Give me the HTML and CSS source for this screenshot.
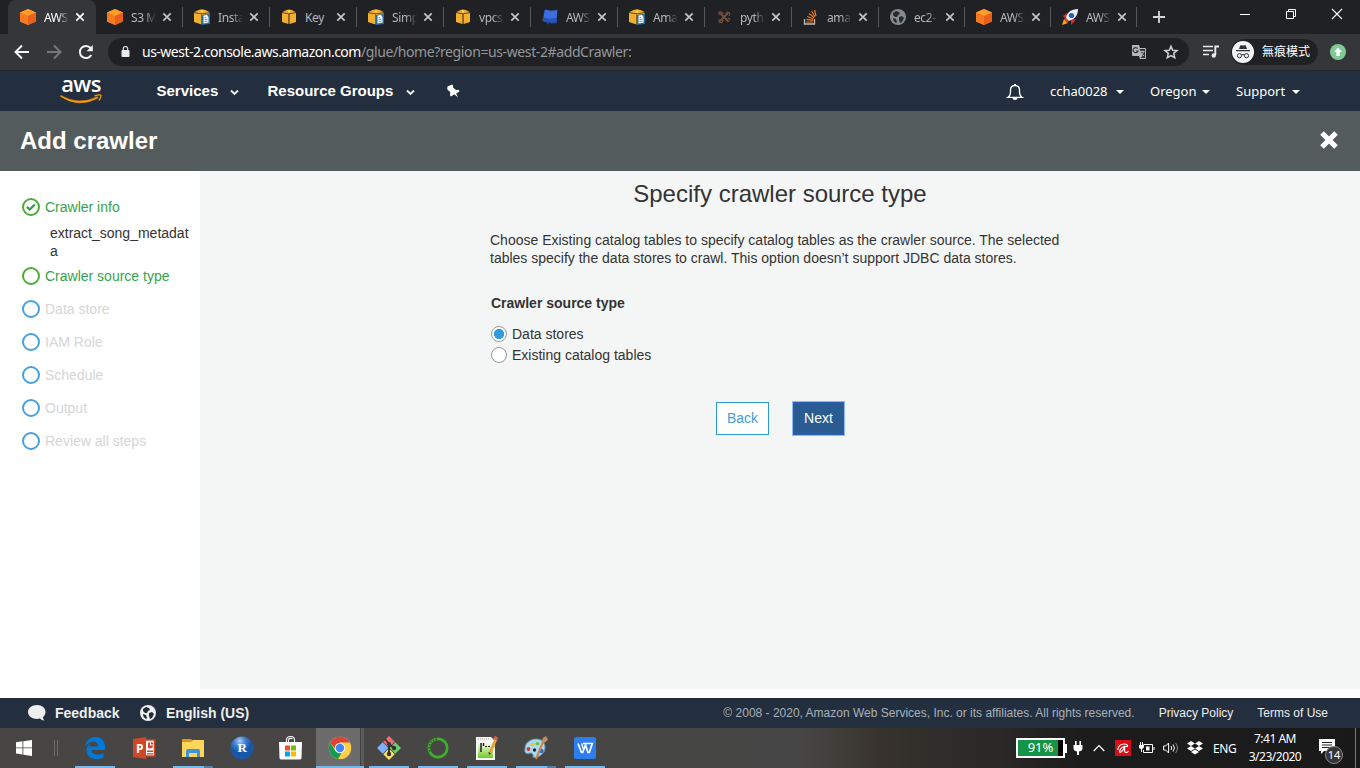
FILE: index.html
```html
<!DOCTYPE html>
<html lang="en">
<head>
<meta charset="utf-8">
<title>AWS Glue Console</title>
<link rel="stylesheet" href="styles.css">
</head>
<body>
<svg class="defs" width="0" height="0">
  <symbol id="cube" viewBox="0 0 16 16"><path fill="#f58020" d="M8 0l8 3.500v9L8 16l-8-3.500v-9z"/><path fill="#ff9d2c" d="M8 0l8 3.500L8 7 0 3.500z"/><path fill="#e8601c" d="M8 7l8-3.500v9L8 16z"/><path fill="#f67b20" d="M0 3.500L8 7v9l-8-3.500z"/></symbol>
  <symbol id="box" viewBox="0 0 16 16"><path fill="#f2b02e" d="M1 4l6.500 1v10L1 13zM8.500 5L15 4v9l-6.500 2z"/><path fill="#eda51f" d="M1 3.300L5.500 1 8 .5 11 1l4 2.300L8 4.500z"/><path fill="#ffc94d" d="M6.500 1h3l-.5 3H7z"/></symbol>
  <symbol id="boxdoc" viewBox="0 0 16 16"><path fill="#f2b02e" d="M0 4l7.500 1v10.500L0 13z"/><path fill="#dc9b25" d="M8 5l7.500-1v2L8 7z"/><path fill="#f5ae24" d="M0 3.300L4.500 1 8 .3l3.500.7L16 3.300 8 4.500z"/><path fill="#ffc94d" d="M6.500 1h3l-.5 3H7z"/><path fill="#1b6fa8" d="M8 6l8-1v10l-8 1z"/><path fill="#fff" d="M9.500 6.500L13 6l1.500 2v5.500l-5 1z"/><path stroke="#2476b2" stroke-width=".8" d="M10.500 8.500h1.500M10.500 10.400h3M10.500 12.300h3"/></symbol>
  <symbol id="x" viewBox="0 0 10 10"><path d="M1.300 1.300l7.400 7.400M8.700 1.300L1.300 8.700" stroke="currentColor" stroke-width="1.700"/></symbol>
  <symbol id="globe" viewBox="0 0 16 16"><circle cx="8" cy="8" r="8" fill="currentColor"/><path class="land" d="M3 4l3-2 3 1 1 2-2 1-1 2H5L3 6zM9 8l3-1 2 2-2 4-2 1-1-3zM3 9l3 1 1 3-1 1c-2-1-3-3-3-5z"/></symbol>
</svg>

<div class="tabstrip">
  <div class="tabs">
    <div class="tab active"><svg class="fav"><use href="#cube"/></svg><span>AWS</span><svg class="close"><use href="#x"/></svg></div>
    <div class="tab"><svg class="fav"><use href="#cube"/></svg><span>S3 M</span><svg class="close"><use href="#x"/></svg></div>
    <div class="tab"><svg class="fav"><use href="#boxdoc"/></svg><span>Insta</span><svg class="close"><use href="#x"/></svg></div>
    <div class="tab"><svg class="fav"><use href="#box"/></svg><span class="full">Key</span><svg class="close"><use href="#x"/></svg></div>
    <div class="tab"><svg class="fav"><use href="#boxdoc"/></svg><span>Simp</span><svg class="close"><use href="#x"/></svg></div>
    <div class="tab"><svg class="fav"><use href="#box"/></svg><span>vpcs</span><svg class="close"><use href="#x"/></svg></div>
    <div class="tab"><svg class="fav" viewBox="0 0 16 16"><path fill="#1d429f" d="M2 1q6 2 13 0v13q-4 1-8 0l-2 2v-2.500L1 12.500z"/><path fill="#3f6ddc" d="M3 .5q6 2 12.500.5L14.500 9Q7 11 1.500 8.500z"/><path fill="#2855bd" d="M1 9q6 2 13.500 0v4Q7 14.500 .5 12z"/></svg><span>AWS</span><svg class="close"><use href="#x"/></svg></div>
    <div class="tab"><svg class="fav"><use href="#boxdoc"/></svg><span>Ama</span><svg class="close"><use href="#x"/></svg></div>
    <div class="tab"><svg class="fav" viewBox="0 0 16 16"><path d="M4 4l8 8M12 4l-8 8" stroke="#75513c" stroke-width="1.800"/><path d="M3 6V3h3l1 2M10 5l1-2 3 1-1 3M3 10v3l3 1 1-3M10 11l2 2 2-3-2-1" fill="none" stroke="#80543d"/></svg><span>pyth</span><svg class="close"><use href="#x"/></svg></div>
    <div class="tab"><svg class="fav" viewBox="0 0 16 16"><path d="M1.500 10v5h10v-5" fill="none" stroke="#bcbbbb" stroke-width="1.300"/><path d="M3.300 13h6.500M3.500 10.300l6.500 1M4.300 7.500l6 2.500M6 4.500l5.200 4.300M8.500 2l3.500 5.700M11.500 1l1.500 6" stroke="#ee7a23" stroke-width="1.200"/></svg><span>ama</span><svg class="close"><use href="#x"/></svg></div>
    <div class="tab"><svg class="fav gray"><use href="#globe"/></svg><span>ec2-</span><svg class="close"><use href="#x"/></svg></div>
    <div class="tab"><svg class="fav"><use href="#cube"/></svg><span>AWS</span><svg class="close"><use href="#x"/></svg></div>
    <div class="tab"><svg class="fav" viewBox="0 0 16 16"><path fill="#cc332c" d="M1 7l4-3 2 2-3 4zM9 12l3-3 1 3-4 4z"/><path fill="#eceef2" d="M4 10C4 4 9 0 16 0c0 7-4 11-10 12z"/><path fill="#f8a51b" d="M0 16l2-6 4 4z"/><path fill="#dc3b2e" d="M2 10l2-1 3 3-2 2z"/><circle cx="9.500" cy="6.500" r="2.600" fill="#235ad5"/></svg><span>AWS</span><svg class="close"><use href="#x"/></svg></div>
  </div>
  <svg class="plus" viewBox="0 0 12 12"><path d="M6 0v12M0 6h12" stroke="#d5d7da" stroke-width="1.800"/></svg>
  <div class="wincontrols">
    <svg viewBox="0 0 12 12"><path d="M1 6.500h10" stroke="#fff"/></svg>
    <svg viewBox="0 0 12 12"><path d="M1.500 3.500h7v7h-7zM3.500 3V1.500h7v7H9" fill="none" stroke="#fff"/></svg>
    <svg viewBox="0 0 12 12"><path d="M1 1l10 10M11 1L1 11" stroke="#fff" stroke-width="1.100"/></svg>
  </div>
</div>

<div class="toolbar">
  <svg class="tbtn" viewBox="0 0 16 16"><path d="M15 8H2M8 1.500L1.500 8 8 14.500" fill="none" stroke="#f1f3f4" stroke-width="1.900"/></svg>
  <svg class="tbtn" viewBox="0 0 16 16"><path d="M1 8h13M8 1.500L14.500 8 8 14.500" fill="none" stroke="#77787b" stroke-width="1.900"/></svg>
  <svg class="tbtn" viewBox="0 0 16 16"><path d="M13.300 11A6.100 6.100 0 1 1 12.600 4" fill="none" stroke="#f1f3f4" stroke-width="2"/><path d="M14.800 1v6.200H8.600z" fill="#f1f3f4"/></svg>
  <div class="omnibox">
    <svg class="lock" viewBox="0 0 10 12"><path fill="#e8eaed" d="M1.500 4h6q1 0 1 1v5q0 1-1 1h-6q-1 0-1-1V5q0-1 1-1z"/><path d="M2.300 4.500V2.700a2.200 2.200 0 0 1 4.400 0v1.800" fill="none" stroke="#e8eaed" stroke-width="1.100"/></svg>
    <div class="url"><b>us-west-2.console.aws.amazon.com</b><span>/glue/home?region=us-west-2#addCrawler:</span></div>
    <svg class="translate" viewBox="0 0 16 16"><path fill="#b4b6b9" d="M1 1h7l1 3h5q1 0 1 1v9q0 1-1 1H9l-1-3H2q-1 0-1-1z"/><path fill="#303235" d="M8.500 5H14v9H9.500l2-2z"/><path d="M6.700 4.700A2.500 2.500 0 1 0 7 7H5" fill="none" stroke="#333538" stroke-width="1.200"/><path d="M9 7.500h4.500M11.200 6.500v1M12.700 7.500q-1 3-2.500 4M10 8.500q1 2 3 3.500" fill="none" stroke="#b4b6b9"/></svg>
    <svg class="star" viewBox="0 0 16 16"><path d="M8 2.200l1.700 4 4.300.4-3.300 2.800 1 4.300L8 11.500l-3.700 2.200 1-4.300L2 6.600l4.300-.4z" fill="none" stroke="#cfd1d4" stroke-width="1.500"/></svg>
  </div>
  <svg class="playlist" viewBox="0 0 16 14"><path d="M0 1.500h10M0 5.500h10M0 9.500h6" stroke="#e8eaed" stroke-width="1.700"/><path d="M12.300 10V1.500H16" fill="none" stroke="#e8eaed" stroke-width="1.900"/><circle cx="10.800" cy="10.500" r="2.200" fill="#e8eaed"/></svg>
  <div class="incognito">
    <svg viewBox="0 0 22 22"><circle cx="11" cy="11" r="11" fill="#f1f3f4"/><path fill="#303134" d="M7 8l1.200-3.500Q8.500 3.800 11 4.500q2.500-.7 2.800 0L15 8z"/><path d="M4 9.700h14M9.500 14q1.500-1 3 0" fill="none" stroke="#303134" stroke-width="1.200"/><circle cx="7.500" cy="14.700" r="2.100" fill="none" stroke="#303134"/><circle cx="14.500" cy="14.700" r="2.100" fill="none" stroke="#303134"/></svg>
    <span>無痕模式</span>
  </div>
  <svg class="update" viewBox="0 0 16 16"><circle cx="8" cy="8" r="8" fill="#81c995"/><path fill="#fff" d="M8 3.500l4 4.500H9.700v4H6.300V8H4z"/></svg>
</div>

<nav class="awsnav">
  <div class="logo"><span>aws</span>
    <svg viewBox="0 0 42 11"><path d="M.8 1.500Q19 12 37.500 2.700L38 4Q18 14.500.4 2.300z" fill="#f90" stroke="#f90" stroke-width=".6"/><path d="M34.500 1.800q6.500-1.600 6.500-.3 0 2.200-2.200 5" fill="none" stroke="#f90" stroke-width="1.300"/></svg></div>
  <span class="navbold services">Services</span><svg class="chev" viewBox="0 0 9 7"><path d="M1 1.500l3.500 3.500L8 1.500" fill="none" stroke="#eee" stroke-width="1.900"/></svg>
  <span class="navbold groups">Resource Groups</span><svg class="chev" viewBox="0 0 9 7"><path d="M1 1.500l3.500 3.500L8 1.500" fill="none" stroke="#eee" stroke-width="1.900"/></svg>
  <svg class="pin" viewBox="0 0 14 14"><path fill="#fff" d="M1.500 2.500L6 .5l1.200 1L7 3.500 10 6l2.500-.3 1 1.500-3.300 2.500L12 13.500 8.300 10.300 5 12.500l-1-1.200.3-3L1.200 5.300z"/></svg>
  <div class="navright">
    <svg class="bell" viewBox="0 0 16 18"><path d="M1 14.300q2.500-1.500 2.500-5V7Q3.500 2.500 8 2.500T12.500 7v2.300q0 3.500 2.500 5z" fill="none" stroke="#fff" stroke-width="1.300"/><path d="M8 1v2" stroke="#fff" stroke-width="2"/><path fill="#fff" d="M5.500 15h5q0 2-2.500 2T5.500 15z"/></svg>
    <span class="user">ccha0028</span><i class="caret"></i>
    <span class="region">Oregon</span><i class="caret"></i>
    <span class="support">Support</span><i class="caret"></i>
  </div>
</nav>

<header class="pagehead"><h1>Add crawler</h1><svg viewBox="0 0 20 20"><path d="M3 3l14 14M17 3L3 17" stroke="#fff" stroke-width="5.200"/></svg></header>

<main class="content">
  <aside class="steps">
    <div class="step done"><i><svg viewBox="0 0 14 14"><path d="M3 6.800l2.800 2.700 5-5" fill="none" stroke="#2ea043" stroke-width="2.300"/></svg></i>Crawler info</div>
    <div class="substep">extract_song_metadata</div>
    <div class="step done"><i></i>Crawler source type</div>
    <div class="step"><i></i>Data store</div>
    <div class="step"><i></i>IAM Role</div>
    <div class="step"><i></i>Schedule</div>
    <div class="step"><i></i>Output</div>
    <div class="step"><i></i>Review all steps</div>
  </aside>
  <section class="panel">
    <h2>Specify crawler source type</h2>
    <div class="form">
      <p>Choose Existing catalog tables to specify catalog tables as the crawler source. The selected tables specify the data stores to crawl. This option doesn’t support JDBC data stores.</p>
      <h3>Crawler source type</h3>
      <div class="option"><i class="radio on"></i>Data stores</div>
      <div class="option"><i class="radio"></i>Existing catalog tables</div>
      <div class="buttons"><button class="back">Back</button><button class="next">Next</button></div>
    </div>
  </section>
</main>

<footer class="awsfoot">
  <svg class="bubble" viewBox="0 0 18 16"><path fill="#eee" d="M9 0c5 0 8.500 3 8.500 7 0 2-1 4-2.500 5 0 1.500.5 2.500 1.500 3.500-2 0-3.500-.7-4.500-2C6 15 0 12 0 7 0 3 4 0 9 0z"/></svg>
  <b class="feedback">Feedback</b>
  <svg class="world"><use href="#globe"/></svg>
  <b class="lang">English (US)</b>
  <div class="legal"><span class="copy">© 2008 - 2020, Amazon Web Services, Inc. or its affiliates. All rights reserved.</span><a>Privacy Policy</a><a>Terms of Use</a></div>
</footer>

<div class="taskbar">
  <svg class="start" viewBox="0 0 16 16"><path fill="#fff" d="M0 2.300l6.500-1v6.200H0zM7.300 1.200L16 0v7.500H7.300zM0 8.300h6.500v6.200l-6.500-1zM7.300 8.300H16V16l-8.700-1.300z"/></svg>
  <i class="grip"></i>
  <div class="apps">
    <div class="app run"><svg viewBox="0 0 24 24"><path fill="#0078d7" d="M2 10.500C3 4.500 7 1 12.500 1 18.500 1 22 5 22 11v3H8.500c.3 5 7 6 12 3v4.500c-7 3.500-17 1-17-7 0-4 2-6 5-7.500C7 8 6.500 9.500 6.500 10.500H15C15 3.500 7 4.500 2 10.500z"/></svg></div>
    <div class="app"><svg viewBox="0 0 24 24"><path fill="#fff" stroke="#d04727" stroke-width="1.500" d="M12 4h10.500v16H12z"/><path fill="#d04727" d="M1 3l13-2v22L1 21zM16 6.500h2v3h3q0 3-3 3-1.500 0-2-1zM19 6q2.500 0 2.500 2.500H19zM15 14.500h6V16h-6zM15 17.300h6v1.200h-6z"/><text x="4" y="16.500" class="pp">P</text></svg></div>
    <div class="app run split"><svg viewBox="0 0 24 24"><path fill="#d69a12" d="M1 3h9l2 2h10v4H1z"/><path fill="#ffd65c" d="M1 6h9l2-2h11v17H1z"/><path fill="#3e94da" d="M5 21v-6q0-2 2-2h10q2 0 2 2v6h-3v-4H8v4z"/></svg></div>
    <div class="app"><svg viewBox="0 0 24 24"><defs><radialGradient id="rg" cx=".4" cy=".2"><stop offset="0" stop-color="#acd0fa"/><stop offset=".5" stop-color="#3f80d0"/><stop offset="1" stop-color="#1856a8"/></radialGradient></defs><circle cx="12" cy="12" r="11.500" fill="url(#rg)"/><text x="7.500" y="16" class="rs">R</text></svg></div>
    <div class="app"><svg viewBox="0 0 24 24"><path fill="#fff" d="M0 6h23l-.5 16q0 1.500-2 1.500h-18q-2 0-2-1.500z"/><path d="M7.500 6V4q0-3.500 4-3.500t4 3.500v2M9.500 6V4Q9.500 2 13.500 2.500" fill="none" stroke="#fff" stroke-width="1.100"/><path fill="#f25022" d="M6 9.500h5v5H6z"/><path fill="#7fba00" d="M12 9.500h5v5h-5z"/><path fill="#00a4ef" d="M6 15.500h5v5H6z"/><path fill="#ffb900" d="M12 15.500h5v5h-5z"/></svg></div>
    <div class="app run chrome"><svg viewBox="0 0 24 24"><circle cx="12" cy="12" r="11.200" fill="#ffcd46"/><path fill="#db4437" d="M2.300 6.400A11.200 11.200 0 0 1 21.700 6.400H12L8 14z"/><path fill="#0f9d58" d="M2.300 6.400l5.200 8.900 6 1.500-3.300 6.300A11.200 11.200 0 0 1 2.300 6.400z"/><circle cx="12" cy="12" r="5.300" fill="#f1f1f1"/><circle cx="12" cy="12" r="4.200" fill="#4285f4"/></svg></div>
    <div class="app run"><svg viewBox="0 0 24 24"><path fill="#f56d70" d="M12 0l5.700 5.700-5.700 5.700-5.700-5.700z"/><path fill="#7fb0ff" d="M5.700 6.300l5.700 5.700-5.700 5.700L0 12z"/><path fill="#69cf66" d="M18.300 6.300L24 12l-5.700 5.700-5.700-5.700z"/><path fill="#ffdf66" d="M12 12.600l5.700 5.700L12 24l-5.700-5.700z"/><path d="M8 3l4 5v10M12 8l5 4" fill="none" stroke="#353535" stroke-width="2"/><circle cx="12" cy="8" r="2" fill="#353535"/><circle cx="17" cy="12" r="2.200" fill="#353535"/><circle cx="12" cy="18" r="2.200" fill="#353535"/></svg></div>
    <div class="app run"><svg viewBox="0 0 24 24"><circle cx="12" cy="12" r="9.200" fill="none" stroke="#3eb12b" stroke-width="2.700"/><path d="M11 3A9 9 0 0 0 4 16" fill="none" stroke="#454545" stroke-width="1.300" stroke-dasharray="1.500 1.500"/></svg></div>
    <div class="app run"><svg viewBox="0 0 24 24"><defs><linearGradient id="np" x2="0" y2="1"><stop offset="0" stop-color="#fff"/><stop offset="1" stop-color="#70cc1c"/></linearGradient></defs><path fill="#f6f7f4" d="M1 1h15l4 4v19H1z"/><path fill="url(#np)" d="M3 6h15v16H3z"/><path d="M3 3h12" stroke="#999" stroke-dasharray="1 1"/><path d="M6 7v9M8.500 7v3" stroke="#222" stroke-width="1.500"/><path d="M10 10.500h2M13 10.500h2" stroke="#222"/><path d="M21 3l-6 14" stroke="#e4a42d" stroke-width="3"/><path fill="#dc5b4e" d="M20 0l3 1.500-1 3-4-2z"/><path fill="#333" d="M13.500 16l2.700 1.200L14 19z"/></svg></div>
    <div class="app run split"><svg viewBox="0 0 24 24"><path fill="#a9daf1" stroke="#719db7" d="M3 7Q9 1 17 4q6 4 3 12-6 7-11 5 1-4-3-4-6 2-5-4 0-4 2-6z"/><ellipse cx="8.500" cy="8.500" rx="2" ry="1.600" fill="#efc12f"/><ellipse cx="13.500" cy="7.500" rx="2" ry="1.600" fill="#6bbc39"/><circle cx="4.500" cy="13" r="1.900" fill="#d73531"/><circle cx="10.500" cy="14" r="1.700" fill="#272727"/><circle cx="17.500" cy="15" r="2.200" fill="#2770d3"/><path d="M19 6l-7 17" stroke="#d28241" stroke-width="2"/><path fill="#bc8f61" d="M17.500 6q0-4 4.500-6l2 4-4 3z"/></svg></div>
    <div class="app run"><svg viewBox="0 0 24 24"><rect x="1" y="1" width="22" height="22" rx="2.500" fill="#2d7ef0"/><path d="M5 7.500l3.500 9h1.200l2.800-7.500 2.500 7.500h1.300l3-9h-9.500" fill="none" stroke="#fff" stroke-width="1.700"/><path d="M8.500 7.500L10.500 13" stroke="#fff" stroke-width="1.400"/></svg></div>
  </div>
  <div class="tray">
    <div class="battery"><span>91%</span></div><i class="nub"></i>
    <svg class="plug" viewBox="0 0 10 16"><path fill="#fff" d="M2 1h1.600v4h2.800V1H8v4h1.500v3q0 3-3.500 3.500V15H4v-3.500Q.5 11 .5 8V5H2z"/></svg>
    <svg class="up" viewBox="0 0 12 8"><path d="M.7 7L6 1.500 11.300 7" fill="none" stroke="#fff" stroke-width="1.200"/></svg>
    <svg class="avira" viewBox="0 0 16 16"><path fill="#d90d16" d="M0 0h16v16H0z"/><path d="M2.500 10Q4 4 9 4q4 0 3.500 2.500Q7 6 5 10q-1 3 1 2 3-2 4-6-1 6 .5 6.500 1.500.5 3-1.500" fill="none" stroke="#fff" stroke-width="1.200"/></svg>
    <svg class="tinybat" viewBox="0 0 16 12"><path d="M4.500 2.500h9v8h-9V8M15 5v3" fill="none" stroke="#fff"/><path fill="#fff" d="M7 4.500h3.500v4H7zM0 3h5v2q-1 2-2 2v3H2V7Q0 7 0 5z"/><path d="M1.500 0v3M3.500 0v3" stroke="#fff"/></svg>
    <svg class="sound" viewBox="0 0 16 14"><path d="M.6 5h2l3-3v10l-3-3h-2z" fill="none" stroke="#fff"/><path d="M8 5q1.500 2 0 4M10 3.500q3 3.500 0 7" fill="none" stroke="#fff"/><path d="M12.500 2q4 5 0 10" fill="none" stroke="#888"/></svg>
    <svg class="dropbox" viewBox="0 0 16 14"><path fill="#fff" d="M4 0l4 2.500L4 5 0 2.500zM12 0l4 2.500L12 5 8 2.500zM4 5l4 2.500L4 10 0 7.500zM12 5l4 2.500-4 2.500-4-2.500zM4 11l4-2.500 4 2.500-4 2.500z"/></svg>
    <span class="eng">ENG</span>
    <div class="clock"><div>7:41 AM</div><div>3/23/2020</div></div>
    <div class="notice"><svg viewBox="0 0 16 16"><path fill="#fff" d="M0 0h16v12H5L2 15v-3H0z"/><path d="M3 3.500h10M3 6h10M3 8.500h10" stroke="#222"/></svg><span>14</span></div>
    <i class="desk"></i>
  </div>
</div>
</body>
</html>
```
FILE: styles.css
```css
* { box-sizing: border-box; }
body { margin: 0; width: 1360px; height: 768px; overflow: hidden; display: flex; flex-direction: column; background: #fff; font-family: "Liberation Sans", Arial, sans-serif; font-size: 14px; color: #333; }
svg { display: block; flex: none; overflow: visible; }
.defs { position: absolute; }

.tabstrip { height: 34px; flex: none; display: flex; background: #202124; padding-left: 9px; font-family: "Noto Sans", sans-serif; font-size: 12px; }
.tabs { display: flex; }
.tab { width: 87px; height: 34px; display: flex; align-items: center; padding-left: 11px; color: #b4b7bb; background: linear-gradient(#55575b, #55575b) right 7px / 1px 20px no-repeat; }
.tab:nth-child(n+11) { width: 86px; }
.tab:nth-child(n+11) .close { margin-left: 6px; }
.tab:nth-child(1) { background: #35363a; border-radius: 8px 8px 0 0; color: #fff; box-shadow: -1px 0 #35363a; }
.tab .fav { width: 16px; height: 16px; }
.gray { color: #898a8c; }
.gray .land, .land { fill: #222c39; }
.tab span { width: 25px; margin-left: 8px; white-space: nowrap; letter-spacing: -.4px; -webkit-mask-image: linear-gradient(to right, #000 55%, transparent); mask-image: linear-gradient(to right, #000 55%, transparent); }
.tab .full { -webkit-mask-image: none; mask-image: none; }
.tab .close { width: 10px; height: 10px; margin-left: 6px; color: #c3c5c8; }
.active .close { color: #fff; }
.plus { width: 12px; height: 12px; margin: 11px 0 0 16px; }
.wincontrols { display: flex; gap: 34px; margin: 8px 17px 0 auto; }
.wincontrols svg { width: 12px; height: 12px; }

.toolbar { height: 37px; flex: none; display: flex; align-items: center; background: #35363a; border-bottom: 1px solid #27282b; padding-left: 14px; }
.tbtn { width: 16px; height: 16px; margin-right: 16px; }
.omnibox { width: 1081px; height: 28px; margin-left: -2px; border-radius: 14px; background: #202124; display: flex; align-items: center; padding-left: 13px; }
.lock { width: 10px; height: 12px; }
.url { margin-left: 11px; padding-bottom: 1px; font: 14px "Noto Sans", sans-serif; color: #94979b; letter-spacing: -.39px; white-space: nowrap; }
.url b { font-weight: 400; color: #fff; letter-spacing: -.5px; }
.translate { width: 16px; height: 16px; margin-left: auto; }
.star { width: 16px; height: 16px; margin: 0 10px 0 16px; }
.playlist { width: 16px; height: 14px; margin-left: 14px; }
.incognito { width: 87px; height: 26px; margin-left: 12px; border-radius: 13px; background: #202124; display: flex; align-items: center; padding-left: 1px; color: #fff; font: 12px "Noto Sans CJK TC", sans-serif; }
.incognito svg { width: 22px; height: 22px; }
.incognito span { margin-left: 8px; padding-bottom: 3px; white-space: nowrap; }
.update { width: 16px; height: 16px; margin-left: 12px; }

.awsnav { height: 40px; flex: none; display: flex; align-items: center; background: #232f3e; color: #fff; }
.logo { width: 42px; height: 28px; margin-left: 60px; display: flex; flex-direction: column; align-items: center; }
.logo span { height: 17px; font: 600 22px/12px "Open Sans", sans-serif; letter-spacing: -.6px; }
.logo svg { width: 42px; height: 11px; margin-top: 1px; }
.navbold { font-weight: 700; font-size: 15px; white-space: nowrap; padding-bottom: 1px; }
.services { width: 62px; margin-left: 54.500px; }
.groups { width: 127px; margin-left: 29px; }
.chev { width: 9px; height: 7px; margin: 3px 0 0 11px; }
.pin { width: 14px; height: 14px; margin-left: 31px; }
.navright { margin-left: auto; padding-right: 60px; display: flex; align-items: center; font: 13px "Noto Sans", sans-serif; }
.bell { width: 16px; height: 18px; margin: 2px 27px 0 0; }
.navright span { white-space: nowrap; }
.user { width: 59px; }
.region { width: 45px; margin-left: 26px; }
.support { width: 49px; margin-left: 26px; }
.caret { border: 4px solid transparent; border-top-color: #fff; border-bottom: 0; margin: 1px 0 0 7px; }

.pagehead { height: 60px; flex: none; background: #545b5c; display: flex; align-items: center; justify-content: space-between; padding: 0 21px 2px 20px; color: #fff; }
.pagehead h1 { margin: 2px 0 0; font-size: 24px; line-height: 28px; }
.pagehead svg { width: 20px; height: 20px; }

.content { height: 527px; flex: none; display: flex; }
.steps { width: 200px; padding: 20px 0 0 22px; }
.step { height: 33px; display: flex; align-items: center; color: #d5d6d7; padding-bottom: 1px; }
.step i { width: 18px; height: 18px; border: 2px solid #46a1dc; border-radius: 50%; margin-right: 5px; }
.step.done { color: #36a34d; }
.step.done i { border-color: #4dad36; }
.substep { width: 141px; margin: 0 0 -1px 28px; line-height: 18px; height: 37px; overflow-wrap: anywhere; }
.panel { width: 1160px; height: 518px; background: #f4f6f6; }
.panel h2 { margin: 9px 0 0; text-align: center; font-weight: 400; font-size: 24px; line-height: 28px; }
.form { width: 580px; margin: 23px 0 0 290px; }
.form p { margin: 0; line-height: 18px; }
.form h3 { margin: 27px 0 11px 1px; font-size: 14px; line-height: 18px; }
.option { height: 21px; display: flex; align-items: center; padding-left: 1px; }
.radio { width: 16px; height: 16px; border: 1px solid #999; border-radius: 50%; margin-right: 5px; background: #fff; }
.radio.on { background: radial-gradient(circle, #329bdc 4.800px, #fff 5.400px); }
.buttons { display: flex; gap: 24px; margin: 37px 0 0 226px; }
.buttons button { height: 33px; padding: 0 0 2px; font: 14px "Liberation Sans", Arial, sans-serif; border-radius: 0; }
.back { width: 53px; background: #fff; border: 1px solid #2c9ad6; color: #469cd3; }
.next { width: 51px; background: #2a5b92; border: 1px solid #2b60b8; color: #fff; box-shadow: 0 0 0 1px #8fb7f2; }

.awsfoot { height: 30px; flex: none; background: #232f3e; display: flex; align-items: center; color: #eee; }
.bubble { width: 18px; height: 16px; margin-left: 28px; }
.feedback { width: 65px; margin-left: 9px; }
.world { width: 16px; height: 16px; margin-left: 20px; }
.lang { margin-left: 10px; }
.legal { margin-left: auto; padding-right: 32px; display: flex; gap: 24px; font-size: 12px; white-space: nowrap; }
.copy { color: #a8b1b9; }

.taskbar { height: 40px; flex: none; display: flex; align-items: center; background: linear-gradient(90deg, #484644 0, #464646 800px, #3f3b36 850px, #37322c 880px, #302e2a 930px, #292825 1000px, #1c1c1c 1080px, #191919 100%); color: #fff; font-family: "Noto Sans", sans-serif; font-size: 12px; }
.start { width: 16px; height: 16px; margin-left: 16px; }
.grip { width: 4px; height: 16px; border: solid #6c6a68; border-width: 0 1px; margin: 0 17px 0 22px; }
.apps { display: flex; gap: 9px; height: 40px; }
.app { width: 40px; height: 40px; display: flex; align-items: center; justify-content: center; }
.app svg { width: 24px; height: 24px; }
.run { background: linear-gradient(#76b9ed, #76b9ed) bottom / 100% 2px no-repeat; }
.split { background: linear-gradient(90deg, #76b9ed 31px, #557fa5 31px) bottom / 100% 2px no-repeat; }
.chrome { width: 48px; margin: 0 -4px; background: linear-gradient(#76b9ed, #76b9ed) bottom / 100% 2px no-repeat, linear-gradient(90deg, #6c6c6c 44px, #404040 44px 45px, #5b5b5b 45px); }
.pp { font: 700 12px "Open Sans", sans-serif; fill: #fff; }
.rs { font: 700 13px "Liberation Serif", serif; fill: #fff; }
.tray { margin-left: auto; display: flex; align-items: center; height: 40px; }
.battery { width: 49px; height: 20px; border: 2px solid #fff; background: linear-gradient(90deg, #159447 40px, #000 40px); text-align: center; line-height: 15px; font-size: 13px; }
.nub { width: 2px; height: 9px; background: #fff; }
.plug { width: 10px; height: 16px; margin-left: 6px; }
.up { width: 12px; height: 8px; margin-left: 10px; }
.avira { width: 16px; height: 16px; margin-left: 10px; }
.tinybat { width: 16px; height: 12px; margin-left: 8px; }
.sound { width: 16px; height: 14px; margin-left: 8px; }
.dropbox { width: 16px; height: 14px; margin-left: 8px; }
.eng { width: 24px; margin-left: 10px; letter-spacing: -.4px; }
.clock { width: 62px; margin-left: 7px; text-align: center; line-height: 18px; letter-spacing: -.5px; white-space: nowrap; }
.notice { width: 26px; height: 26px; margin-left: 12px; position: relative; padding: 4px 0 0 1px; }
.notice svg { width: 16px; height: 16px; }
.notice span { position: absolute; left: 7px; top: 11px; width: 18px; height: 18px; line-height: 16px; border: 1px solid #8b8b8b; border-radius: 50%; background: #363636; text-align: center; font-size: 11px; }
.desk { width: 1px; height: 40px; margin: 0 4px 0 11px; background: #777; }
```
